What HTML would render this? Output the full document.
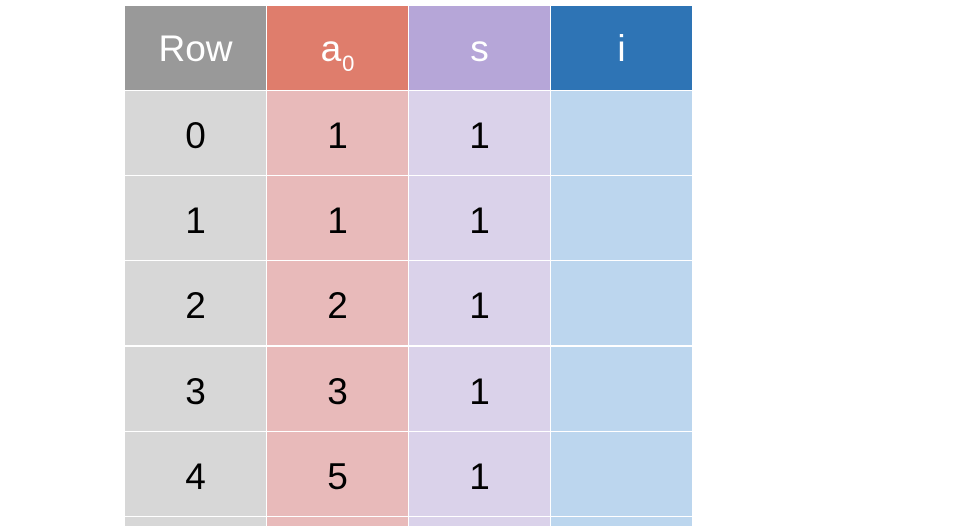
<!DOCTYPE html>
<html><head><style>
html,body{margin:0;padding:0;background:#fff;width:978px;height:526px;overflow:hidden;position:relative}
.c{position:absolute;width:141px;display:flex;align-items:center;justify-content:center;font-family:"Liberation Sans",sans-serif;font-size:37px;color:#000;box-sizing:border-box;padding-top:5px;overflow:hidden}
.h{color:#fff;padding-top:2px}
sub{font-size:22px;position:relative;top:10px;vertical-align:baseline;margin-left:1px}
</style></head><body>
<script>
const cols=[125,267,409,551];
const hc=['#999999','#df7d6c','#b6a6d8','#2e74b5'];
const bc=['#d7d7d7','#e8baba','#dad2ea','#bcd6ee'];
const ht=['Row','a<sub>0</sub>','s','i'];
const data=[['0','1','1',''],['1','1','1',''],['2','2','1',''],['3','3','1',''],['4','5','1',''],['','','','']];
let s='';
for(let j=0;j<4;j++){s+=`<div class="c h" style="left:${cols[j]}px;top:6px;height:84px;background:${hc[j]}"><span>${ht[j]}</span></div>`;}
for(let i=0;i<6;i++){const t=Math.round(91+i*85.2);const h=Math.min(84,526-t);for(let j=0;j<4;j++){s+=`<div class="c" style="left:${cols[j]}px;top:${t}px;height:${h}px;background:${bc[j]}">${data[i][j]}</div>`;}}
document.write(s);
</script>
</body></html>
